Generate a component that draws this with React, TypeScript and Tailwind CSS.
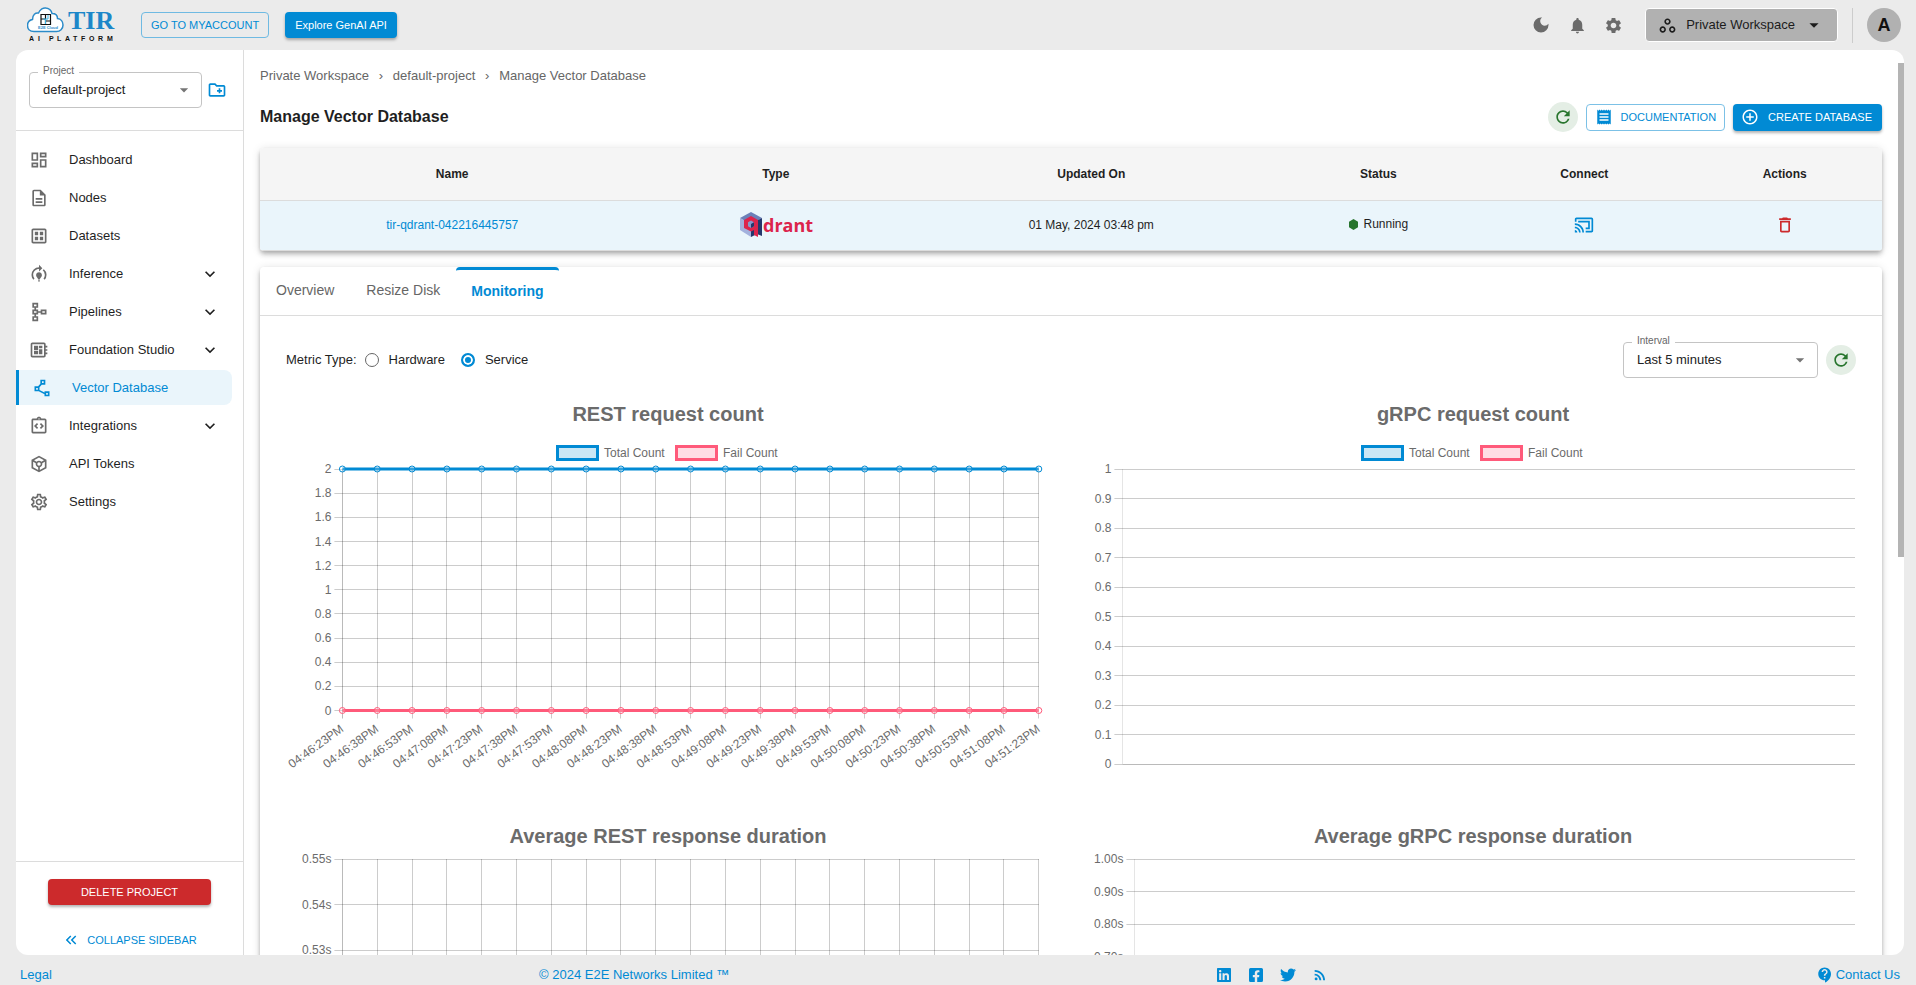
import { ReactNode, useState } from "react";
import {
  MdAddCircleOutline,
  MdArrowDropDown,
  MdContactSupport,
  MdDarkMode,
  MdDeleteOutline,
  MdExpandMore,
  MdKeyboardDoubleArrowLeft,
  MdNotifications,
  MdOutlineCastConnected,
  MdOutlineCreateNewFolder,
  MdOutlineDashboard,
  MdOutlineDataset,
  MdOutlineDescription,
  MdOutlineDeveloperBoard,
  MdOutlineIntegrationInstructions,
  MdOutlineModelTraining,
  MdOutlinePolyline,
  MdOutlineSchema,
  MdOutlineSettings,
  MdOutlineToken,
  MdOutlineWorkspaces,
  MdReceipt,
  MdRefresh,
  MdRssFeed,
  MdSettings,
} from "react-icons/md";
import { FaFacebookSquare, FaLinkedin, FaTwitter } from "react-icons/fa";

const navItems = [
  { label: "Dashboard", icon: MdOutlineDashboard },
  { label: "Nodes", icon: MdOutlineDescription },
  { label: "Datasets", icon: MdOutlineDataset },
  { label: "Inference", icon: MdOutlineModelTraining, expandable: true },
  { label: "Pipelines", icon: MdOutlineSchema, expandable: true },
  { label: "Foundation Studio", icon: MdOutlineDeveloperBoard, expandable: true },
  { label: "Vector Database", icon: MdOutlinePolyline, active: true },
  { label: "Integrations", icon: MdOutlineIntegrationInstructions, expandable: true },
  { label: "API Tokens", icon: MdOutlineToken },
  { label: "Settings", icon: MdOutlineSettings },
];

const columns = [
  { label: "Name", width: "w-[23.7%]" },
  { label: "Type", width: "w-[16.2%]" },
  { label: "Updated On", width: "w-[22.7%]" },
  { label: "Status", width: "w-[12.7%]" },
  { label: "Connect", width: "w-[12.7%]" },
  { label: "Actions", width: "w-[12%]" },
];

const tabs = ["Overview", "Resize Disk", "Monitoring"];

const times = [
  "04:46:23PM", "04:46:38PM", "04:46:53PM", "04:47:08PM", "04:47:23PM", "04:47:38PM", "04:47:53PM",
  "04:48:08PM", "04:48:23PM", "04:48:38PM", "04:48:53PM", "04:49:08PM", "04:49:23PM", "04:49:38PM",
  "04:49:53PM", "04:50:08PM", "04:50:23PM", "04:50:38PM", "04:50:53PM", "04:51:08PM", "04:51:23PM",
];

type ChartProps = {
  title: string;
  ticks: string[];
  left: number;
  right: number;
  top: number;
  bottom: number;
  labels?: string[];
  showLabels?: boolean;
  legend?: boolean;
  series?: { color: string; fill: string; at: number }[];
};

const BLUE = "#018ad4";
const PINK = "#ff5a7a";
const legendItems = [
  { label: "Total Count", x: 271, color: BLUE, fill: "#cbe7f5" },
  { label: "Fail Count", x: 390, color: PINK, fill: "#ffdde4" },
];

function Chart({ title, ticks, left, right, top, bottom, labels = [], showLabels, legend, series = [] }: ChartProps) {
  const stepY = (bottom - top) / (ticks.length - 1);
  const stepX = labels.length ? (right - left) / (labels.length - 1) : 0;
  const px = (n: number) => Math.floor(n) + 0.5;

  return (
    <svg viewBox="0 0 765 382" className="block w-full text-[12px]" fill="#6b6b6b" role="img" aria-label={title}>
      <text x="382" y="29" textAnchor="middle" className="text-[20px] font-bold">
        {title}
      </text>
      {legend &&
        legendItems.map((item) => (
          <g key={item.label}>
            <rect x={item.x + 0.5} y="54.5" width="40" height="13" fill={item.fill} stroke={item.color} strokeWidth="3" />
            <text x={item.x + 47} y="65">
              {item.label}
            </text>
          </g>
        ))}
      {ticks.map((tick, i) => {
        const y = top + i * stepY;
        return (
          <g key={tick}>
            <line x1={left - 8} x2={left} y1={px(y)} y2={px(y)} stroke="#000" strokeOpacity="0.2" />
            <line x1={left} x2={right} y1={px(y)} y2={px(y)} stroke="#000" strokeOpacity={tick === "0" ? 0.27 : 0.2} />
            <text x={left - 11} y={y + 4} textAnchor="end">
              {tick}
            </text>
          </g>
        );
      })}
      {labels.length === 0 && <line x1={px(left)} x2={px(left)} y1={top} y2={bottom} stroke="#000" strokeOpacity="0.1" />}
      {labels.map((label, i) => {
        const x = left + i * stepX;
        return (
          <g key={label}>
            <line x1={px(x)} x2={px(x)} y1={top} y2={bottom + 8} stroke="#000" strokeOpacity={i ? 0.2 : 0.27} />
            {showLabels && (
              <text transform={`translate(${x + 2} ${bottom + 20}) rotate(-36)`} textAnchor="end">
                {label}
              </text>
            )}
          </g>
        );
      })}
      {series.map((s) => (
        <g key={s.color}>
          <line x1={left} x2={right} y1={s.at} y2={s.at} stroke={s.color} strokeWidth="3" />
          {labels.map((label, i) => (
            <circle key={label} cx={left + i * stepX} cy={s.at} r="3" fill={s.fill} fillOpacity="0.2" stroke={s.color} />
          ))}
        </g>
      ))}
    </svg>
  );
}

function Logo() {
  return (
    <a href="#" aria-label="TIR AI Platform" className="block">
      <svg width="90" height="38" viewBox="0 0 90 38">
        <path
          d="M8 26.500C3.500 26.500 1.500 23.500 1.500 20.500c0-3.500 2.500-5.500 5-6C6.500 9.500 9.500 7.500 12.500 8c1.500-4 5-5.500 7.500-5 3.500.5 5.500 3 6 5.500 3.500 0 5.500 2 5.500 5 3.500.5 5.500 3.500 5.500 6.500 0 4-3 6.500-6.500 6.500z"
          transform="translate(-1 -1)"
          fill="#fff"
          stroke="#2b8bc9"
          strokeWidth="1.500"
        />
        <path d="M14 8.500h9.500v10H14zM18.500 8.500v10M14 13h4.500M18.500 15h5" fill="none" stroke="#111" strokeWidth="1.200" />
        <path d="M16 13h5V9M18.500 13v5" fill="none" stroke="#39b4e6" />
        <text x="11" y="23" className="text-[4px] font-bold" fill="#2b8bc9">
          E2E Cloud
        </text>
        <text x="41" y="23" className="font-['Liberation_Serif',serif] text-[26px] font-bold" fill="#1c87c9">
          TIR
        </text>
        <text x="2 11 17 22 30 38 46 54 62 71 80" y="35" className="text-[7px] font-bold" fill="#111">
          AI PLATFORM
        </text>
      </svg>
    </a>
  );
}

function QdrantLogo() {
  return (
    <svg width="74" height="26" viewBox="0 0 74 26" className="mx-auto block" role="img" aria-label="qdrant">
      <path d="M12 0l11 6-11 7L1 6z" fill="#6c80b8" />
      <path d="M1 6l11 6v13L1 18z" fill="#a3b1dd" />
      <path d="M23 6v18l-5-2-6 3V12z" fill="#24386c" />
      <path d="M12 4l7 4v17l-4-2v-5l-3 1.500L5 16V8z" fill="#dc244c" />
      <path d="M12 8.500l3 1.800v4L12 16l-3-1.700v-4z" fill="#8798cc" />
      <path d="M12 12l3-1.700v4L12 16z" fill="#24386c" />
      <text x="24" y="20" className="font-['Open_Sans',sans-serif] text-[18px] font-bold" fill="#dc244c">
        drant
      </text>
    </svg>
  );
}

function SelectField({ id, label, value, className }: { id: string; label: string; value: string; className: string }) {
  return (
    <div className={`relative ${className}`}>
      <label htmlFor={id} className="absolute -top-[9px] left-[9px] bg-white px-[5px] text-[10px] leading-4 text-[#666]">
        {label}
      </label>
      <select
        id={id}
        className="h-9 w-full appearance-none rounded border border-[#c4c4c4] bg-transparent pl-[13px] pr-8 text-[13px] text-[#222]"
      >
        <option>{value}</option>
      </select>
      <MdArrowDropDown className="pointer-events-none absolute right-2 top-2 size-5 text-[#757575]" />
    </div>
  );
}

function RefreshButton({ label }: { label: string }) {
  return (
    <button aria-label={label} className="flex size-[30px] items-center justify-center rounded-full bg-[#e4eee5] text-[#28752e]">
      <MdRefresh className="size-5" />
    </button>
  );
}

function MetricRadio({ label, checked, onChange }: { label: string; checked: boolean; onChange: () => void }) {
  return (
    <label className="flex items-center gap-[10px]">
      <input
        type="radio"
        name="metric"
        checked={checked}
        onChange={onChange}
        className="size-[14px] appearance-none rounded-full border border-[#666] checked:border-2 checked:border-[#018ad4] checked:bg-[#018ad4] checked:shadow-[inset_0_0_0_2px_#fff]"
      />
      {label}
    </label>
  );
}

function HeaderIcon({ label, children }: { label: string; children: ReactNode }) {
  return (
    <button aria-label={label} className="flex size-9 items-center justify-center text-[#6b6b6b]">
      {children}
    </button>
  );
}

function Header() {
  return (
    <header className="flex h-[50px] shrink-0 items-center pl-[27px] pr-[15px]">
      <Logo />
      <button className="ml-6 h-[26px] rounded border border-[#6fbae2] px-[9px] text-[11px] text-[#018ad4]">
        GO TO MYACCOUNT
      </button>
      <button className="ml-4 h-[26px] rounded bg-[#018ad4] px-[10px] text-[11px] text-white shadow-[0_2px_3px_rgba(0,0,0,0.3)]">
        Explore GenAI API
      </button>
      <div className="ml-auto flex items-center">
        <HeaderIcon label="Dark mode">
          <MdDarkMode className="size-5" />
        </HeaderIcon>
        <HeaderIcon label="Notifications">
          <MdNotifications className="size-[19px]" />
        </HeaderIcon>
        <HeaderIcon label="Settings">
          <MdSettings className="size-[19px]" />
        </HeaderIcon>
        <button className="ml-[14px] flex h-[34px] items-center rounded border border-white bg-[#b1b1b1] px-3 text-[13px] text-[#1c1c1c]">
          <MdOutlineWorkspaces className="size-[19px]" />
          <span className="ml-[9px] mr-2">Private Workspace</span>
          <MdArrowDropDown className="size-[22px]" />
        </button>
        <span className="ml-[14px] mr-[14px] h-[35px] w-px bg-[#ccc]" />
        <button aria-label="Account" className="size-[34px] rounded-full bg-[#b1b1b1] text-[18px] font-bold text-[#111]">
          A
        </button>
      </div>
    </header>
  );
}

function Sidebar() {
  return (
    <aside className="flex w-[228px] shrink-0 flex-col border-r border-[#dcdcdc]">
      <div className="flex h-[81px] items-start border-b border-[#dcdcdc] pl-[13px] pt-[22px]">
        <SelectField id="project" label="Project" value="default-project" className="w-[173px]" />
        <button aria-label="Create project" className="ml-[5px] mt-2 text-[#018ad4]">
          <MdOutlineCreateNewFolder className="size-5" />
        </button>
      </div>
      <nav className="mt-[11px] flex flex-col gap-[3px] pr-[11px]">
        {navItems.map((item) => (
          <a
            key={item.label}
            href="#"
            className={`flex h-[35px] items-center pl-[13px] pr-3 text-[13px] ${
              item.active ? "rounded-r-lg border-l-[3px] border-[#018ad4] bg-[#eaf5fb] text-[#018ad4]" : "text-[#1f1f1f]"
            }`}
          >
            <item.icon className={`mr-5 size-5 ${item.active ? "" : "text-[#6b6b6b]"}`} />
            {item.label}
            {item.expandable && <MdExpandMore className="ml-auto size-5" />}
          </a>
        ))}
      </nav>
      <div className="mt-auto flex flex-col items-center border-t border-[#dcdcdc] pb-[5px] pt-[17px]">
        <button className="h-[26px] w-[163px] rounded bg-[#cc2a2c] text-[11px] text-white shadow-[0_2px_3px_rgba(0,0,0,0.3)]">
          DELETE PROJECT
        </button>
        <button className="mt-[25px] flex h-5 items-center gap-[7px] text-[11px] text-[#018ad4]">
          <MdKeyboardDoubleArrowLeft className="size-[18px]" />
          COLLAPSE SIDEBAR
        </button>
      </div>
    </aside>
  );
}

function DatabaseTable() {
  return (
    <div className="overflow-hidden rounded shadow-[0_2px_4px_-1px_rgba(0,0,0,0.2),0_4px_5px_rgba(0,0,0,0.14),0_1px_10px_rgba(0,0,0,0.12)]">
      <table className="w-full table-fixed text-center text-[12px] text-[#1f1f1f]">
        <thead>
          <tr className="h-[52px] border-b border-[#dcdcdc] bg-[#f5f5f5]">
            {columns.map((col) => (
              <th key={col.label} className={`${col.width} font-bold`}>
                {col.label}
              </th>
            ))}
          </tr>
        </thead>
        <tbody>
          <tr className="h-[50px] border-b border-[#dcdcdc] bg-[#eaf5fb]">
            <td>
              <a href="#" className="text-[#018ad4]">
                tir-qdrant-042216445757
              </a>
            </td>
            <td>
              <QdrantLogo />
            </td>
            <td>01 May, 2024 03:48 pm</td>
            <td>
              <span className="inline-flex items-center gap-1">
                <svg width="11" height="11" viewBox="0 0 11 11">
                  <path d="M5.500 0l4.500 2.700v5.600L5.500 11 1 8.300V2.700z" fill="#28752e" />
                </svg>
                Running
              </span>
            </td>
            <td>
              <button aria-label="Connect" className="mx-auto block text-[#018ad4]">
                <MdOutlineCastConnected className="size-5" />
              </button>
            </td>
            <td>
              <button aria-label="Delete" className="mx-auto block text-[#cc2a2c]">
                <MdDeleteOutline className="size-5" />
              </button>
            </td>
          </tr>
        </tbody>
      </table>
    </div>
  );
}

function MonitoringCard() {
  const [tab, setTab] = useState("Monitoring");
  const [metric, setMetric] = useState("Service");

  return (
    <section className="mt-4 rounded shadow-[0_2px_4px_-1px_rgba(0,0,0,0.2),0_4px_5px_rgba(0,0,0,0.14),0_1px_10px_rgba(0,0,0,0.12)]">
      <div role="tablist" className="flex h-[49px] border-b border-[#dcdcdc]">
        {tabs.map((name) => (
          <button
            key={name}
            role="tab"
            aria-selected={tab === name}
            onClick={() => setTab(name)}
            className={`border-t-[3px] text-[14px] ${
              tab === name
                ? "rounded-t border-[#018ad4] px-[15px] pb-[2px] font-bold text-[#018ad4]"
                : "border-transparent px-4 pb-1 text-[#666]"
            }`}
          >
            {name}
          </button>
        ))}
      </div>
      <div className="px-[26px] pb-10 pt-[26px]">
        <div className="flex h-9 items-center text-[13px] text-[#1f1f1f]">
          <span>Metric Type:</span>
          <div className="ml-2 flex gap-4">
            <MetricRadio label="Hardware" checked={metric === "Hardware"} onChange={() => setMetric("Hardware")} />
            <MetricRadio label="Service" checked={metric === "Service"} onChange={() => setMetric("Service")} />
          </div>
          <SelectField id="interval" label="Interval" value="Last 5 minutes" className="ml-auto mr-2 w-[195px]" />
          <RefreshButton label="Refresh metrics" />
        </div>
        <div className="mt-[14px] grid grid-cols-2 gap-10">
          <Chart
            title="REST request count"
            ticks={["2", "1.8", "1.6", "1.4", "1.2", "1", "0.8", "0.6", "0.4", "0.2", "0"]}
            left={56.4}
            right={752.8}
            top={77.2}
            bottom={318.5}
            labels={times}
            showLabels
            legend
            series={[
              { color: BLUE, fill: "#fff", at: 77 },
              { color: PINK, fill: "#fff", at: 318.5 },
            ]}
          />
          <Chart
            title="gRPC request count"
            ticks={["1", "0.9", "0.8", "0.7", "0.6", "0.5", "0.4", "0.3", "0.2", "0.1", "0"]}
            left={31.4}
            right={764}
            top={77}
            bottom={372}
            legend
          />
          <Chart
            title="Average REST response duration"
            ticks={["0.55s", "0.54s", "0.53s"]}
            left={56.4}
            right={752.8}
            top={45}
            bottom={136}
            labels={times}
          />
          <Chart
            title="Average gRPC response duration"
            ticks={["1.00s", "0.90s", "0.80s", "0.70s"]}
            left={43.4}
            right={764}
            top={45}
            bottom={143}
          />
        </div>
      </div>
    </section>
  );
}

function Footer() {
  return (
    <footer className="flex h-[30px] shrink-0 items-center justify-between pl-5 pr-4 pt-[10px] text-[13px] text-[#018ad4]">
      <a href="#">Legal</a>
      <a href="#">© 2024 E2E Networks Limited ™</a>
      <div className="flex items-center gap-4">
        <a href="#" aria-label="LinkedIn"><FaLinkedin className="size-4" /></a>
        <a href="#" aria-label="Facebook"><FaFacebookSquare className="size-4" /></a>
        <a href="#" aria-label="Twitter"><FaTwitter className="size-4" /></a>
        <a href="#" aria-label="RSS"><MdRssFeed className="size-4" /></a>
      </div>
      <a href="#" className="flex items-center gap-[2px]">
        <MdContactSupport className="size-[18px]" />
        Contact Us
      </a>
    </footer>
  );
}

export default function App() {
  return (
    <div className="flex h-screen flex-col overflow-hidden bg-[#ebebeb] font-['Liberation_Sans',Arial,sans-serif]">
      <Header />
      <div className="relative ml-4 mr-3 flex min-h-0 flex-1 overflow-hidden rounded-xl bg-white">
        <Sidebar />
        <main className="min-w-0 flex-1 overflow-y-auto pl-4 pr-[22px] [scrollbar-width:none]">
          <nav aria-label="Breadcrumb" className="mt-4 flex h-5 items-center text-[13px] text-[#666]">
            <a href="#">Private Workspace</a>
            <span className="w-6 text-center">›</span>
            <a href="#">default-project</a>
            <span className="w-6 text-center">›</span>
            <span>Manage Vector Database</span>
          </nav>
          <div className="mb-4 mt-4 flex h-[30px] items-center gap-2">
            <h1 className="mr-auto text-[16px] font-bold text-[#1f1f1f]">Manage Vector Database</h1>
            <RefreshButton label="Refresh list" />
            <button className="flex h-[27px] items-center gap-2 rounded border border-[#7cc1e6] px-2 text-[11px] text-[#018ad4]">
              <MdReceipt className="size-[18px]" />
              DOCUMENTATION
            </button>
            <button className="flex h-[27px] items-center gap-[9px] rounded bg-[#018ad4] pl-2 pr-[10px] text-[11px] text-white shadow-[0_2px_3px_rgba(0,0,0,0.3)]">
              <MdAddCircleOutline className="size-[18px]" />
              CREATE DATABASE
            </button>
          </div>
          <DatabaseTable />
          <MonitoringCard />
        </main>
        <div className="absolute right-0 top-[13px] h-[494px] w-[6px] bg-[#b4b4b4]" />
      </div>
      <Footer />
    </div>
  );
}
